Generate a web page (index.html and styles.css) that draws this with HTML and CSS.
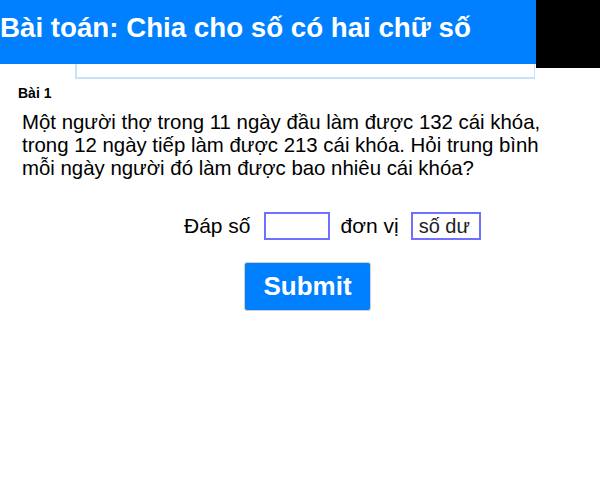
FILE: index.html
```html
<!DOCTYPE html>
<html lang="vi">
<head>
<meta charset="utf-8">
<link rel="stylesheet" href="styles.css">
</head>
<body>
<div class="top">
  <div class="banner"><h1 class="title">Bài toán: Chia cho số có hai chữ số</h1></div>
  <div class="corner"></div>
</div>
<div class="bar"></div>
<h2 class="label">Bài 1</h2>
<p class="question">Một người thợ trong 11 ngày đầu làm được 132 cái khóa, trong 12 ngày tiếp làm được 213 cái khóa. Hỏi trung bình mỗi ngày người đó làm được bao nhiêu cái khóa?</p>
<div class="answer">
  <span class="txt">Đáp số</span>
  <span class="box box-empty"></span>
  <span class="txt">đơn vị</span>
  <span class="box box-unit">số dư</span>
</div>
<div class="actions"><button class="submit">Submit</button></div>
</body>
</html>
```
FILE: styles.css
```css
html, body { margin: 0; padding: 0; background: #fff; }
body { font-family: "Liberation Sans", Arial, sans-serif; color: #000; width: 600px; }
.top { display: flex; align-items: flex-start; }
.banner { width: 536px; height: 64px; background: #0080ff; overflow: hidden; }
.corner { width: 64px; height: 68px; background: #000; }
.title { margin: 0; padding: 12px 0 0 0; font-size: 27.7px; font-weight: bold; color: #fff; line-height: 32px; white-space: nowrap; }
.bar { margin: -15px 0 0 76px; width: 459px; height: 26px; box-sizing: border-box; background: #fff; border: 1px solid #c6e2ff; border-bottom-width: 2px; box-shadow: -1px 0 0 #c6e2ff; }
.label { margin: 6px 0 0 18px; font-size: 14px; font-weight: bold; line-height: 16px; }
.question { margin: 10px 0 0 22px; width: 545px; font-size: 20.4px; line-height: 23px; }
.answer { display: flex; align-items: center; margin: 32px 0 0 184px; font-size: 21px; }
.txt { line-height: 28px; }
.box { box-sizing: border-box; height: 28px; border: 2px solid #7070ff; background: #fff; }
.box-empty { width: 66px; margin: 0 11px 0 13px; }
.box-unit { width: 70px; margin-left: 12px; padding: 0 0 0 6px; font-size: 20px; line-height: 24px; color: #222; white-space: nowrap; }
.actions { margin: 22px 0 0 244px; }
.submit { display: block; width: 127px; height: 49px; border: 1px solid #d0d0d0; border-radius: 3px; background: #0080ff; color: #fff; font-family: "Liberation Sans", Arial, sans-serif; font-size: 26px; font-weight: bold; padding: 0; }
```
